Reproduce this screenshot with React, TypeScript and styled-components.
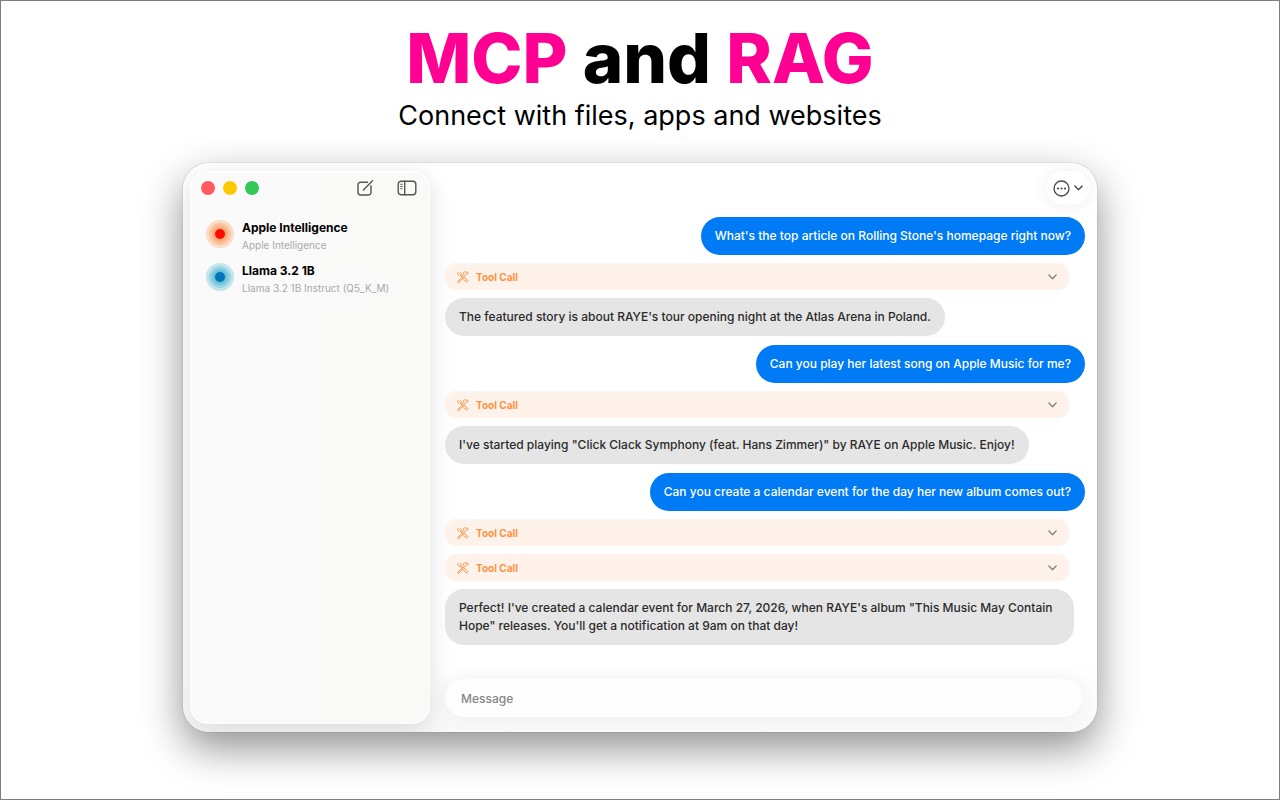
import React from "react";
import styled, { createGlobalStyle } from "styled-components";

const GlobalStyle = createGlobalStyle`
  * { box-sizing: border-box; }
  body { margin: 0; background: #fff; font-family: Inter, "Liberation Sans", sans-serif; color: #000; }
  button, input { font: inherit; color: inherit; border: 0; padding: 0; background: none; }
  h1, h2, p, ul { margin: 0; padding: 0; }
  ul { list-style: none; }
`;

const Page = styled.main`
  display: flex;
  flex-direction: column;
  align-items: center;
  min-height: 100vh;
  padding: 23px 24px 67px;
  border: 1px solid #7f7f7f;
  overflow: hidden;
`;

const Title = styled.h1`
  font-size: 69px;
  line-height: 68px;
  font-weight: 800;
  text-align: center;
`;

const Accent = styled.span`
  color: #ff0093;
`;

const Tagline = styled.p`
  font-size: 27px;
  line-height: 48px;
  margin-bottom: 23px;
  text-align: center;
`;

const AppWindow = styled.section`
  display: flex;
  flex: 1;
  width: 100%;
  max-width: 914px;
  border-radius: 26px;
  overflow: hidden;
  background: linear-gradient(to bottom, #fff 88%, #f8f8f8);
  box-shadow: 0 0 1px rgba(0, 0, 0, 0.5), 0 16px 40px rgba(0, 0, 0, 0.44);
`;

const Sidebar = styled.aside`
  flex: 0 0 240px;
  margin: 8px 0 8px 7px;
  padding: 5px 12px 0 10px;
  border-radius: 18px;
  border: 1px solid #fff;
  background: linear-gradient(to right, #fafafa, #f9f9f8);
  box-shadow: 0 6px 24px rgba(0, 0, 0, 0.13);
`;

const SidebarBar = styled.header`
  display: flex;
  align-items: center;
  height: 22px;
`;

const Lights = styled.div`
  display: flex;
  gap: 8px;
  margin-right: auto;
`;

const Light = styled.button<{ $color: string }>`
  width: 14px;
  height: 14px;
  border-radius: 50%;
  background: ${(p) => p.$color};
`;

const IconButton = styled.button`
  display: flex;
  color: #555;
  & + & { margin-left: 23px; }
`;

const Contacts = styled.ul`
  display: flex;
  flex-direction: column;
  gap: 8px;
  padding: 21px 5px 0;
`;

const Contact = styled.li`
  display: flex;
  align-items: flex-start;
  gap: 8px;
`;

const ContactName = styled.h2`
  font-size: 12px;
  line-height: 15px;
  font-weight: 700;
`;

const ContactModel = styled.p`
  font-size: 10px;
  line-height: 20px;
  color: #a9a9a9;
`;

const Chat = styled.section`
  flex: 1;
  min-width: 0;
  display: flex;
  flex-direction: column;
  padding: 8px 12px 15px 15px;
`;

const MoreButton = styled.button`
  align-self: flex-end;
  display: flex;
  align-items: center;
  justify-content: center;
  gap: 4px;
  width: 44px;
  height: 34px;
  margin: 0 -5px 12px 0;
  border-radius: 17px;
  color: #4a4a4a;
  background: #fff;
  box-shadow: 0 1px 18px rgba(0, 0, 0, 0.07);
`;

const Thread = styled.div`
  display: flex;
  flex-direction: column;
  gap: 9px;
`;

const Exchange = styled.div`
  display: flex;
  flex-direction: column;
  gap: 8px;
`;

const Bubble = styled.p<{ $mine?: boolean }>`
  align-self: ${(p) => (p.$mine ? "flex-end" : "flex-start")};
  max-width: 629px;
  padding: 10px 14px;
  border-radius: 19px;
  font-size: 12px;
  line-height: 18px;
  font-weight: 500;
  color: ${(p) => (p.$mine ? "#fff" : "#2b2b2b")};
  background: ${(p) => (p.$mine ? "#007af5" : "#e5e5e5")};
`;

const ToolCall = styled.button`
  display: flex;
  align-items: center;
  gap: 7px;
  height: 27px;
  margin-right: 16px;
  padding: 0 12px;
  border-radius: 11px;
  font-size: 10px;
  font-weight: 700;
  color: #ff9240;
  background: #fff2ea;
`;

const ToolLabel = styled.span`
  flex: 1;
  text-align: left;
`;

const MessageInput = styled.input`
  margin: auto 3px 0 0;
  height: 38px;
  padding: 0 16px;
  border-radius: 19px;
  font-size: 12px;
  font-weight: 500;
  background: #fdfdfd;
  box-shadow: 0 0 20px rgba(0, 0, 0, 0.05);
  outline: none;
  &::placeholder { color: #858585; opacity: 1; }
`;

const Avatar = ({ ring, core }: { ring: string; core: string }) => (
  <svg width="28" height="28" viewBox="0 0 28 28" aria-hidden="true">
    <circle cx="14" cy="14" r="14" fill={ring} opacity=".28" />
    <circle cx="14" cy="14" r="11" fill={ring} opacity=".3" />
    <circle cx="14" cy="14" r="8.500" fill={ring} opacity=".3" />
    <circle cx="14" cy="14" r="6.500" fill={ring} opacity=".35" />
    <circle cx="14" cy="14" r="5" fill={core} />
  </svg>
);

const Chevron = ({ color }: { color: string }) => (
  <svg width="9" height="6" viewBox="0 0 9 6" fill="none" stroke={color} strokeWidth="1.400" strokeLinecap="round" strokeLinejoin="round" aria-hidden="true">
    <path d="M.9 1 4.5 4.700 8.100 1" />
  </svg>
);

const ToolsIcon = () => (
  <svg width="12" height="12" viewBox="0 0 12 12" fill="none" stroke="currentColor" strokeWidth="1" strokeLinecap="round" strokeLinejoin="round" aria-hidden="true">
    <path d="M1.500.9C.6 1.600.5 2.900 1.300 3.600c.6.6 1.300.7 2 .5l5.300 6.400c.5.6 1.400.7 1.900.2s.5-1.300-.1-1.800L4.100 3.400c.2-.8 0-1.500-.5-2" />
    <path d="M7.300 4.900 9.600 2.700l.8.5 1-1L9 .7 7.600.8 6.400 2l.4.9-.9.9M4.800 6.600 1 10c-.4.4-.4.9 0 1.200.3.4.8.4 1.200 0l3.500-3.800" />
  </svg>
);

const Tool = () => (
  <ToolCall type="button">
    <ToolsIcon />
    <ToolLabel>Tool Call</ToolLabel>
    <Chevron color="#8f8078" />
  </ToolCall>
);

const contacts = [
  { name: "Apple Intelligence", model: "Apple Intelligence", ring: "#ff8f45", core: "#ff0800" },
  { name: "Llama 3.2 1B", model: "Llama 3.2 1B Instruct (Q5_K_M)", ring: "#38afd0", core: "#0074b8" },
];

const exchanges = [
  {
    ask: "What's the top article on Rolling Stone's homepage right now?",
    tools: 1,
    reply: "The featured story is about RAYE's tour opening night at the Atlas Arena in Poland.",
  },
  {
    ask: "Can you play her latest song on Apple Music for me?",
    tools: 1,
    reply: "I've started playing \"Click Clack Symphony (feat. Hans Zimmer)\" by RAYE on Apple Music. Enjoy!",
  },
  {
    ask: "Can you create a calendar event for the day her new album comes out?",
    tools: 2,
    reply: "Perfect! I've created a calendar event for March 27, 2026, when RAYE's album \"This Music May Contain Hope\" releases. You'll get a notification at 9am on that day!",
  },
];

export default function App() {
  return (
    <>
      <GlobalStyle />
      <Page>
        <Title>
          <Accent>MCP</Accent> and <Accent>RAG</Accent>
        </Title>
        <Tagline>Connect with files, apps and websites</Tagline>
        <AppWindow>
          <Sidebar>
            <SidebarBar>
              <Lights>
                <Light type="button" aria-label="Close" $color="#ff5a5f" />
                <Light type="button" aria-label="Minimize" $color="#fcc800" />
                <Light type="button" aria-label="Zoom" $color="#34c759" />
              </Lights>
              <IconButton type="button" aria-label="New chat">
                <svg width="18" height="18" viewBox="0 0 18 18" fill="none" stroke="currentColor" strokeWidth="1.400" strokeLinecap="round" strokeLinejoin="round">
                  <path d="M11.500 3.200H4.700a2.700 2.700 0 0 0-2.700 2.700v7.400A2.700 2.700 0 0 0 4.700 16h7.600a2.700 2.700 0 0 0 2.700-2.700V6.600" />
                  <path d="M16.500 1.800 8.100 10.200l-.6 1" />
                </svg>
              </IconButton>
              <IconButton type="button" aria-label="Toggle sidebar">
                <svg width="20" height="16" viewBox="0 0 20 16" fill="none" stroke="currentColor" strokeWidth="1.400" strokeLinecap="round">
                  <rect x="1.200" y="1.200" width="17.600" height="13.600" rx="3" />
                  <path d="M7.700 1.200v13.600" />
                  <path d="M3.700 4.300h1.500M3.700 6.500h1.500M3.700 8.700h1.500" strokeWidth="1" />
                </svg>
              </IconButton>
            </SidebarBar>
            <Contacts>
              {contacts.map((c) => (
                <Contact key={c.name}>
                  <Avatar ring={c.ring} core={c.core} />
                  <div>
                    <ContactName>{c.name}</ContactName>
                    <ContactModel>{c.model}</ContactModel>
                  </div>
                </Contact>
              ))}
            </Contacts>
          </Sidebar>
          <Chat>
            <MoreButton type="button" aria-label="More options">
              <svg width="17" height="17" viewBox="0 0 17 17" fill="none" stroke="currentColor" strokeWidth="1.300" aria-hidden="true">
                <circle cx="8.500" cy="8.500" r="7.500" />
                <g fill="currentColor" stroke="none">
                  <circle cx="5" cy="8.500" r="1.100" />
                  <circle cx="8.500" cy="8.500" r="1.100" />
                  <circle cx="12" cy="8.500" r="1.100" />
                </g>
              </svg>
              <Chevron color="#4a4a4a" />
            </MoreButton>
            <Thread>
              {exchanges.map((e) => (
                <Exchange key={e.ask}>
                  <Bubble $mine>{e.ask}</Bubble>
                  {Array.from({ length: e.tools }, (_, i) => (
                    <Tool key={i} />
                  ))}
                  <Bubble>{e.reply}</Bubble>
                </Exchange>
              ))}
            </Thread>
            <MessageInput aria-label="Message" placeholder="Message" />
          </Chat>
        </AppWindow>
      </Page>
    </>
  );
}
